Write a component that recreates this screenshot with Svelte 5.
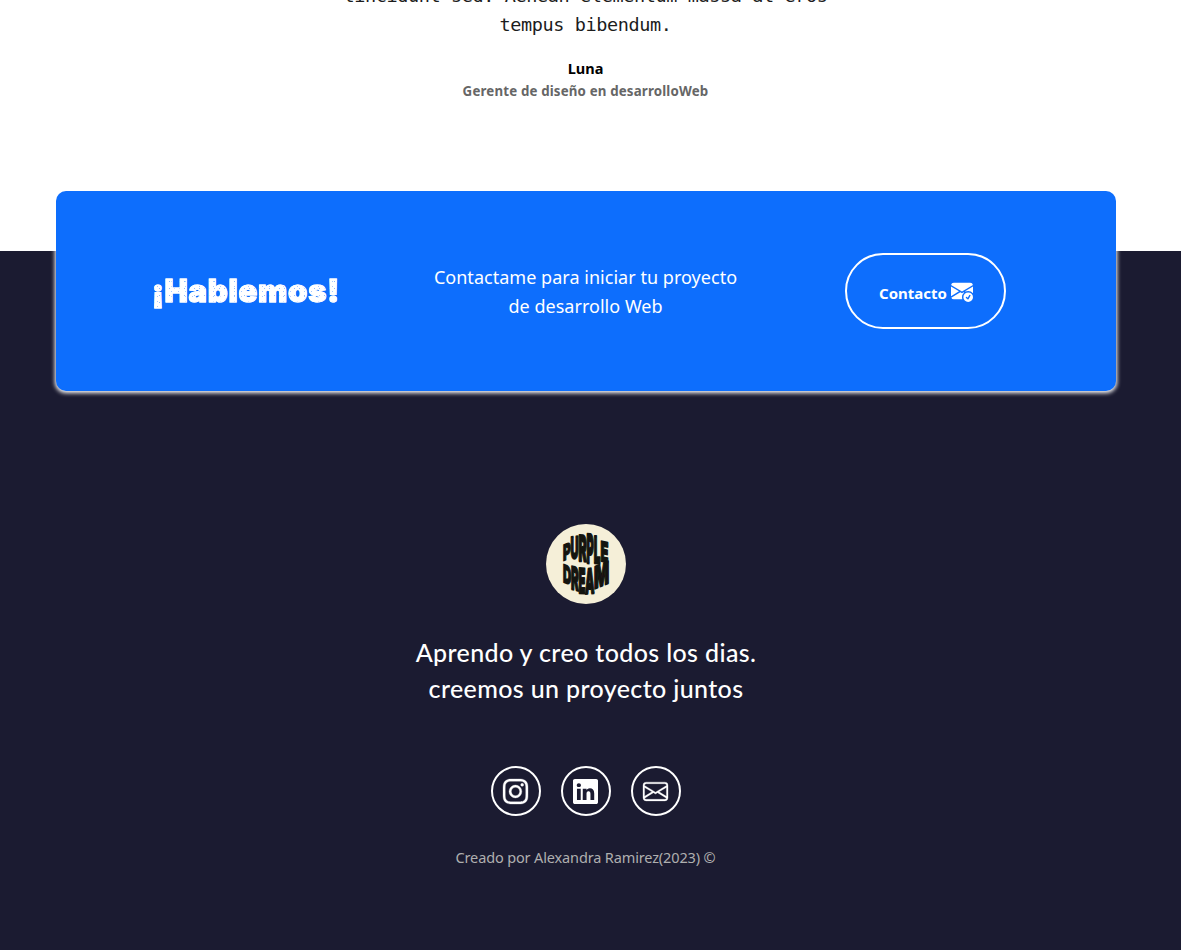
<script>
  const logoRows = [
    { c: 'P', x: 563, w: 8, y: 545, h: 16, skew: -22 },
    { c: 'U', x: 570.5, w: 8.5, y: 537, h: 22, skew: -6 },
    { c: 'R', x: 578.5, w: 8.5, y: 535, h: 26, skew: 4 },
    { c: 'P', x: 586.5, w: 7.5, y: 534, h: 29, skew: 4 },
    { c: 'L', x: 593.8, w: 6.8, y: 536, h: 27, skew: 4 },
    { c: 'E', x: 600.5, w: 8, y: 541, h: 20, skew: 12 },
    { c: 'D', x: 563, w: 8.5, y: 564, h: 18, skew: 22 },
    { c: 'R', x: 571, w: 8, y: 566, h: 23, skew: 14 },
    { c: 'E', x: 578.5, w: 7, y: 568, h: 25, skew: 4 },
    { c: 'A', x: 585, w: 9.5, y: 569, h: 25, skew: -6 },
    { c: 'M', x: 594, w: 15, y: 567, h: 22, skew: -22 }
  ];
  // Advance widths of the heavy capitals at 10px, whose cap height is 7.3
  const glyphWidth = { P: 6.8, U: 7.6, R: 6.9, L: 5.8, E: 6.2, D: 7.4, A: 8, M: 9.5 };
  const letters = logoRows.map((l) => ({
    ...l,
    t: `translate(${l.x - 546} ${l.y + l.h - 524}) skewY(${l.skew}) scale(${l.w / glyphWidth[l.c]} ${l.h / 7.3})`
  }));
  const social = [
    { name: 'instagram', d: 'M8 0C5.829 0 5.556.01 4.703.048 3.85.088 3.269.222 2.76.42a3.917 3.917 0 0 0-1.417.923A3.927 3.927 0 0 0 .42 2.76C.222 3.268.087 3.85.048 4.7.01 5.555 0 5.827 0 8.001c0 2.172.01 2.444.048 3.297.04.852.174 1.433.372 1.942.205.526.478.972.923 1.417.444.445.89.719 1.416.923.51.198 1.09.333 1.942.372C5.555 15.99 5.827 16 8 16s2.444-.01 3.298-.048c.851-.04 1.434-.174 1.943-.372a3.916 3.916 0 0 0 1.416-.923c.445-.445.718-.891.923-1.417.197-.509.332-1.09.372-1.942C15.99 10.445 16 10.173 16 8s-.01-2.445-.048-3.299c-.04-.851-.175-1.433-.372-1.941a3.926 3.926 0 0 0-.923-1.417A3.911 3.911 0 0 0 13.24.42c-.51-.198-1.092-.333-1.943-.372C10.443.01 10.172 0 7.998 0h.003zm-.717 1.442h.718c2.136 0 2.389.007 3.232.046.78.035 1.204.166 1.486.275.373.145.64.319.92.599.28.28.453.546.598.92.11.281.24.705.275 1.485.039.843.047 1.096.047 3.231s-.008 2.389-.047 3.232c-.035.78-.166 1.203-.275 1.485a2.47 2.47 0 0 1-.599.919c-.28.28-.546.453-.92.598-.28.11-.704.24-1.485.276-.843.038-1.096.047-3.232.047s-2.39-.009-3.233-.047c-.78-.036-1.203-.166-1.485-.276a2.478 2.478 0 0 1-.92-.598 2.48 2.48 0 0 1-.6-.92c-.109-.281-.24-.705-.275-1.485-.038-.843-.046-1.096-.046-3.233 0-2.136.008-2.388.046-3.231.036-.78.166-1.204.276-1.486.145-.373.319-.64.599-.92.28-.28.546-.453.92-.598.282-.11.705-.24 1.485-.276.738-.034 1.024-.044 2.515-.045v.002zm4.988 1.328a.96.96 0 1 0 0 1.92.96.96 0 0 0 0-1.92zm-4.27 1.122a4.109 4.109 0 1 0 0 8.217 4.109 4.109 0 0 0 0-8.217zm0 1.441a2.667 2.667 0 1 1 0 5.334 2.667 2.667 0 0 1 0-5.334z' },
    { name: 'linkedin', d: 'M0 1.146C0 .513.526 0 1.175 0h13.65C15.474 0 16 .513 16 1.146v13.708c0 .633-.526 1.146-1.175 1.146H1.175C.526 16 0 15.487 0 14.854V1.146zm4.943 12.248V6.169H2.542v7.225h2.401zm-1.2-8.212c.837 0 1.358-.554 1.358-1.248-.015-.709-.52-1.248-1.342-1.248-.822 0-1.359.54-1.359 1.248 0 .694.521 1.248 1.327 1.248h.016zm4.908 8.212V9.359c0-.216.016-.432.08-.586.173-.431.568-.878 1.232-.878.869 0 1.216.662 1.216 1.634v3.865h2.401V9.25c0-2.22-1.184-3.252-2.764-3.252-1.274 0-1.845.7-2.165 1.193v.025h-.016a5.54 5.54 0 0 1 .016-.025V6.169h-2.4c.03.678 0 7.225 0 7.225h2.4z' },
    { name: 'email', d: 'M0 4a2 2 0 0 1 2-2h12a2 2 0 0 1 2 2v8a2 2 0 0 1-2 2H2a2 2 0 0 1-2-2V4Zm2-1a1 1 0 0 0-1 1v.217l7 4.2 7-4.2V4a1 1 0 0 0-1-1H2Zm13 2.383-4.708 2.825L15 11.105V5.383Zm-.034 6.876-5.64-3.471L8 9.583l-1.326-.795-5.64 3.47A1 1 0 0 0 2 13h12a1 1 0 0 0 .966-.741ZM1 11.105l4.708-2.897L1 5.383v5.722Z' }
  ];
</script>

<div class="page">
  <section class="testimonial">
    <p class="quote"><span>tincidunt sed. Aenean elementum massa at eros</span><span>tempus bibendum.</span></p>
    <p class="name">Luna</p>
    <p class="role">Gerente de diseño en desarrolloWeb</p>
  </section>

  <footer>
    <div class="card">
      <h2>¡Hablemos!</h2>
      <p class="pitch">Contactame para iniciar tu proyecto<br />de desarrollo Web</p>
      <button>
        <span>Contacto</span>
        <svg width="22" height="22" viewBox="0 0 16 16" fill="currentColor">
          <path d="M.05 3.555A2 2 0 0 1 2 2h12a2 2 0 0 1 1.95 1.555L8 8.414.05 3.555ZM0 4.697v7.104l5.803-3.558L0 4.697ZM6.761 8.83l-6.57 4.026A2 2 0 0 0 2 14h6.256A4.493 4.493 0 0 1 8 12.5a4.49 4.49 0 0 1 1.606-3.446l-.367-.225L8 9.586l-1.239-.757ZM16 4.697v4.974A4.491 4.491 0 0 0 12.5 8a4.49 4.49 0 0 0-1.965.45l-.338-.207L16 4.697Z" />
          <path d="M16 12.5a3.5 3.5 0 1 1-7 0 3.5 3.5 0 0 1 7 0Zm-1.993-1.679a.5.5 0 0 0-.686.172l-1.17 1.95-.547-.547a.5.5 0 0 0-.708.708l.774.773a.75.75 0 0 0 1.174-.144l1.335-2.226a.5.5 0 0 0-.172-.686Z" />
        </svg>
      </button>
    </div>

    <svg class="logo" width="80" height="80" viewBox="0 0 80 80">
      <circle cx="40" cy="40" r="40" fill="#f5efd8" />
      {#each letters as l}
        <text transform={l.t}>{l.c}</text>
      {/each}
    </svg>

    <p class="motto"><span>Aprendo y creo todos los dias.</span><span>creemos un proyecto juntos</span></p>

    <nav>
      {#each social as s}
        <a href="#{s.name}" aria-label={s.name}>
          <svg class={s.name} width="25" height="25" viewBox="0 0 16 16" fill="currentColor"><path d={s.d} /></svg>
        </a>
      {/each}
    </nav>
    <p class="credit">Creado por Alexandra Ramirez(2023) ©</p>
  </footer>
</div>

<style>
  :global(body) { margin: 0; overflow: hidden; }
  .page {
    height: 950px;
    overflow: hidden;
    display: flex;
    flex-direction: column;
    background: #fff;
    font-family: 'Noto Sans', sans-serif;
  }
  p, h2 { margin: 0; white-space: nowrap; }
  .testimonial {
    height: 251px;
    flex: none;
    box-sizing: border-box;
    padding-right: 10px;
    display: flex;
    flex-direction: column;
    align-items: center;
  }
  .quote {
    display: flex;
    flex-direction: column;
    align-items: center;
    margin-top: -19px;
    font: 18.5px/29px 'DejaVu Sans Mono', monospace;
    letter-spacing: -0.38px;
    color: #1c1c1c;
  }
  .name {
    margin-top: 18px;
    font-weight: 700;
    font-size: 14.5px;
    line-height: 22px;
    color: #000;
  }
  .role {
    margin-top: 1px;
    font-weight: 700;
    font-size: 13.3px;
    line-height: 22px;
    letter-spacing: 0.16px;
    color: #666;
  }
  footer {
    flex: 1;
    background: #1b1b31;
    color: #fff;
    padding-right: 9px;
    display: flex;
    flex-direction: column;
    align-items: center;
  }
  .card {
    width: 1060px;
    height: 200px;
    flex: none;
    box-sizing: border-box;
    margin-top: -60px;
    padding-left: 96px;
    display: grid;
    grid-template-columns: 188px 491px 161px;
    align-items: center;
    border-radius: 10px;
    background: #0d6efd;
    box-shadow: 0 1px 4px 1px #fff;
  }
  h2 {
    font-family: Inter, sans-serif;
    font-weight: 900;
    font-size: 31px;
    line-height: 40px;
    letter-spacing: 0.75px;
    color: transparent;
    -webkit-text-stroke: 1px #fff;
    background:
      radial-gradient(circle, #8cb9ff 0.6px, transparent 1px) 0 0 / 5px 7px,
      radial-gradient(circle, #a5c8ff 0.5px, transparent 1px) 2px 3px / 7px 5px,
      #fff;
    background-clip: text;
    -webkit-background-clip: text;
  }
  .pitch {
    padding-top: 2px;
    text-align: center;
    font-size: 18px;
    line-height: 29px;
    letter-spacing: 0.03px;
  }
  button {
    width: 161px;
    height: 76px;
    margin-left: 14px;
    padding: 0;
    display: flex;
    align-items: center;
    justify-content: center;
    gap: 4px;
    color: #fff;
    background: transparent;
    border: 2px solid #fff;
    border-radius: 38px;
    font: 700 15px/22px 'Noto Sans', sans-serif;
  }
  button span { padding: 3px 0 0 1px; }
  .logo {
    flex: none;
    margin-top: 133px;
  }
  .logo text {
    font: 900 10px Inter, sans-serif;
    fill: #14140f;
    stroke: #14140f;
    stroke-width: 0.65px;
    stroke-linejoin: round;
  }
  .motto {
    display: flex;
    flex-direction: column;
    align-items: center;
    margin-top: 30px;
    margin-bottom: 1px;
    font: 500 25px/36px Lato, sans-serif;
    letter-spacing: 0.37px;
  }
  nav {
    display: flex;
    gap: 20px;
    margin-top: 59px;
  }
  nav a {
    width: 46px;
    height: 46px;
    border: 2px solid #fff;
    border-radius: 50%;
    display: flex;
    align-items: center;
    justify-content: center;
    color: #fff;
  }
  nav svg {
    margin: 1px 1px 0 0;
    overflow: visible;
  }
  nav .instagram, nav .email {
    stroke: currentColor;
    stroke-width: 0.2px;
  }
  .credit {
    margin-top: 29px;
    padding-right: 1px;
    font-size: 14.5px;
    line-height: 24px;
    letter-spacing: -0.14px;
    color: #afafaf;
  }
</style>
